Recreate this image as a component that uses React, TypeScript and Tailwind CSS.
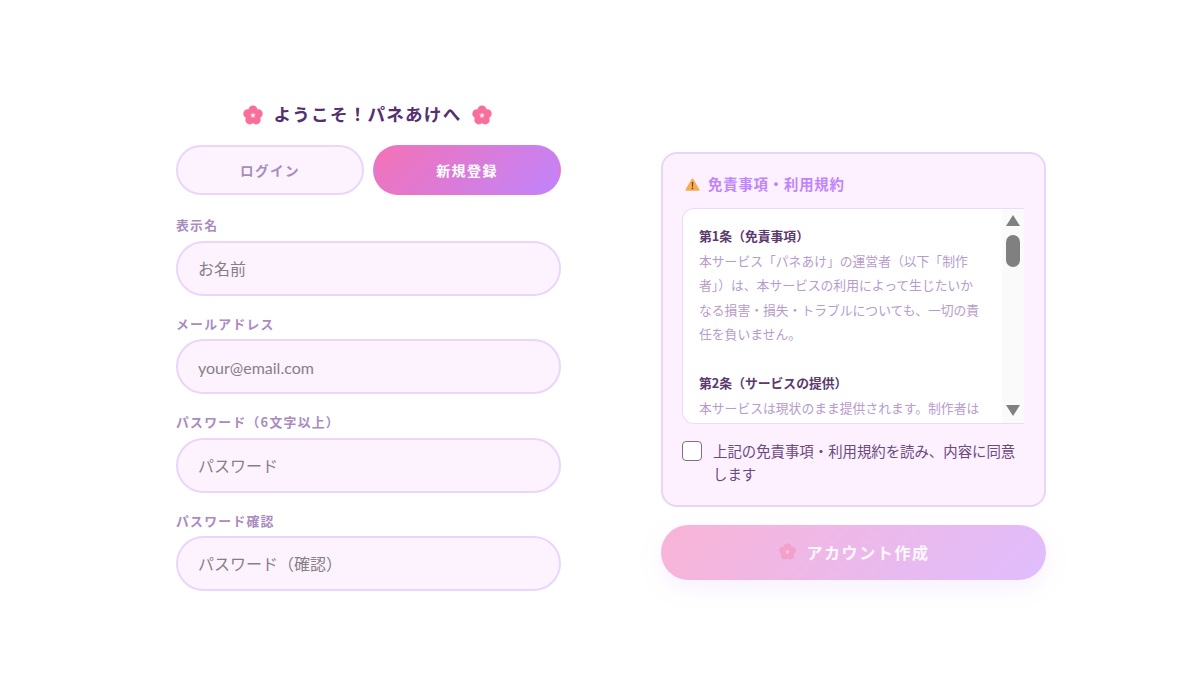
const FONT = "[font-family:'Noto_Sans_CJK_JP','Noto_Sans',sans-serif]";

const FIELDS = [
  { label: "表示名", placeholder: "お名前", latin: false },
  { label: "メールアドレス", placeholder: "your@email.com", latin: true },
  { label: "パスワード（6文字以上）", placeholder: "パスワード", latin: false },
  { label: "パスワード確認", placeholder: "パスワード（確認）", latin: false },
];

// cherry blossom emoji
function Blossom({ className }: { className?: string }) {
  return (
    <svg viewBox="0 0 20 20" className={className} aria-hidden>
      <g fill="#f8709a">
        <circle cx="10" cy="5" r="4.5" />
        <circle cx="15.2" cy="8.8" r="4.5" />
        <circle cx="13.2" cy="14.9" r="4.5" />
        <circle cx="6.8" cy="14.9" r="4.5" />
        <circle cx="4.8" cy="8.8" r="4.5" />
        <circle cx="10" cy="10.5" r="4" />
      </g>
      <path d="M10 7.6l.8 1.9 2 .1-1.6 1.3.5 2-1.7-1.1-1.7 1.1.5-2-1.6-1.3 2-.1z" fill="#fff3f7" />
    </svg>
  );
}

function Warning() {
  return (
    <svg viewBox="0 0 16 14" className="h-[13px] w-[15px]" aria-hidden>
      <path d="M8 .6c.4 0 .7.2.9.6l6.6 11.2c.3.6-.1 1.3-.8 1.3H1.3c-.7 0-1.100-.7-.8-1.300L7.100 1.200c.2-.4.5-.6.9-.6z" fill="#f7ab52" />
      <path d="M7.200 4.400h1.600l-.3 5H7.500z" fill="#5a4632" />
      <circle cx="8" cy="11.200" r=".9" fill="#5a4632" />
    </svg>
  );
}

function Field({ label, placeholder, latin }: { label: string; placeholder: string; latin: boolean }) {
  return (
    <div className="flex flex-col">
      <label className="mb-[6.5px] h-[18px] text-[12.8px] leading-[18px] font-bold tracking-[1.3px] text-[#a98bc0]">{label}</label>
      <input
        type="text"
        placeholder={placeholder}
        className={`h-[55px] w-full rounded-full border-[2.5px] border-[#ead6fa] bg-[#fdf3ff] px-5 text-base outline-none placeholder:text-[#858085] ${latin ? "pt-[1px] font-['Lato',sans-serif]" : `pb-[1px] ${FONT}`}`}
      />
    </div>
  );
}

function TermsBox() {
  return (
    <div className="flex h-[216px] w-[342px] overflow-hidden rounded-l-xl border border-r-0 border-[#eadcf8] bg-white">
      <div className="min-w-0 flex-1 overflow-hidden pt-[15px] pr-[21px] pl-4 text-[12.8px] leading-[24.5px] text-[#b79ccb]">
        <p className="font-bold text-[#5b3a6e]">第1条（免責事項）</p>
        <p>本サービス「パネあけ」の運営者（以下「制作者」）は、本サービスの利用によって生じたいかなる損害・損失・トラブルについても、一切の責任を負いません。</p>
        <p className="mt-[24.5px] font-bold text-[#5b3a6e]">第2条（サービスの提供）</p>
        <p>本サービスは現状のまま提供されます。制作者は</p>
      </div>
      {/* scrollbar */}
      <div className="flex w-[22px] shrink-0 flex-col items-center bg-[#fafafa] pt-[6px] pb-[7px]">
        <svg viewBox="0 0 14 11" className="h-[11px] w-[14px]" aria-hidden>
          <path d="M7 0l7 11H0z" fill="#808080" />
        </svg>
        <div className="mt-[9px] h-[32px] w-[14px] rounded-full bg-[#808080]" />
        <svg viewBox="0 0 14 11" className="mt-auto h-[11px] w-[14px]" aria-hidden>
          <path d="M0 0h14L7 11z" fill="#808080" />
        </svg>
      </div>
    </div>
  );
}

export default function App() {
  return (
    <div className={`h-[675px] w-[1200px] overflow-hidden bg-white pt-[104px] pl-[176px] ${FONT}`}>
      <div className="flex gap-[100px]">
        {/* login / signup form */}
        <div className="flex w-[385px] flex-col">
          <h1 className="flex h-[21px] items-center justify-center gap-[11px] pr-[2px] text-[17.6px] font-bold tracking-[1.2px] text-[#55306f]">
            <Blossom className="h-[20px] w-[20px]" />
            <span>ようこそ！パネあけへ</span>
            <Blossom className="h-[20px] w-[20px]" />
          </h1>
          <div className="mt-[20px] flex gap-[9px]">
            <button className="h-[50px] flex-1 rounded-full border-[2.5px] border-[#ead6fa] bg-[#fdf3ff] text-[13.6px] font-bold tracking-[1.400px] text-[#a98bc0]">
              ログイン
            </button>
            <button className="h-[50px] flex-1 rounded-full border-2 border-transparent bg-[linear-gradient(135deg,#f472b6,#c084fc)] text-[14px] font-bold tracking-[1.400px] text-white">
              新規登録
            </button>
          </div>
          <div className="mt-[21px] flex flex-col gap-[19px]">
            {FIELDS.map((f) => (
              <Field key={f.label} {...f} />
            ))}
          </div>
        </div>

        {/* terms + submit */}
        <div className="flex w-[385px] flex-col pt-[48px]">
          <div className="h-[355px] rounded-2xl border-[2.5px] border-[#e6d6f8] bg-[#fdf0ff] pt-[20px] pl-[19px]">
            <div className="flex h-[20px] items-center gap-[8px] pl-[3px] text-[14.4px] font-bold tracking-[0.8px] text-[#c084fc]">
              <Warning />
              <span>免責事項・利用規約</span>
            </div>
            <div className="mt-[14px]">
              <TermsBox />
            </div>
            <label className="mt-[16px] flex gap-[11px] pr-[22px]">
              <span className="mt-[1px] h-[20px] w-[20px] shrink-0 rounded-[4px] border-[1.5px] border-[#7d6f85] bg-white" />
              <span className="text-[14.4px] leading-[22.5px] text-[#6b4a7d]">上記の免責事項・利用規約を読み、内容に同意します</span>
            </label>
          </div>
          <button className="mt-[18px] flex h-[55px] items-center justify-center gap-[10px] rounded-full bg-[linear-gradient(135deg,#f9b4d6,#dfbdfd)] pb-[2px] pl-[2px] text-base font-bold tracking-[1.600px] text-white/90 shadow-[0_8px_24px_rgba(192,132,252,0.12)]">
            <Blossom className="h-[17px] w-[17px] opacity-30" />
            <span>アカウント作成</span>
          </button>
        </div>
      </div>
    </div>
  );
}
